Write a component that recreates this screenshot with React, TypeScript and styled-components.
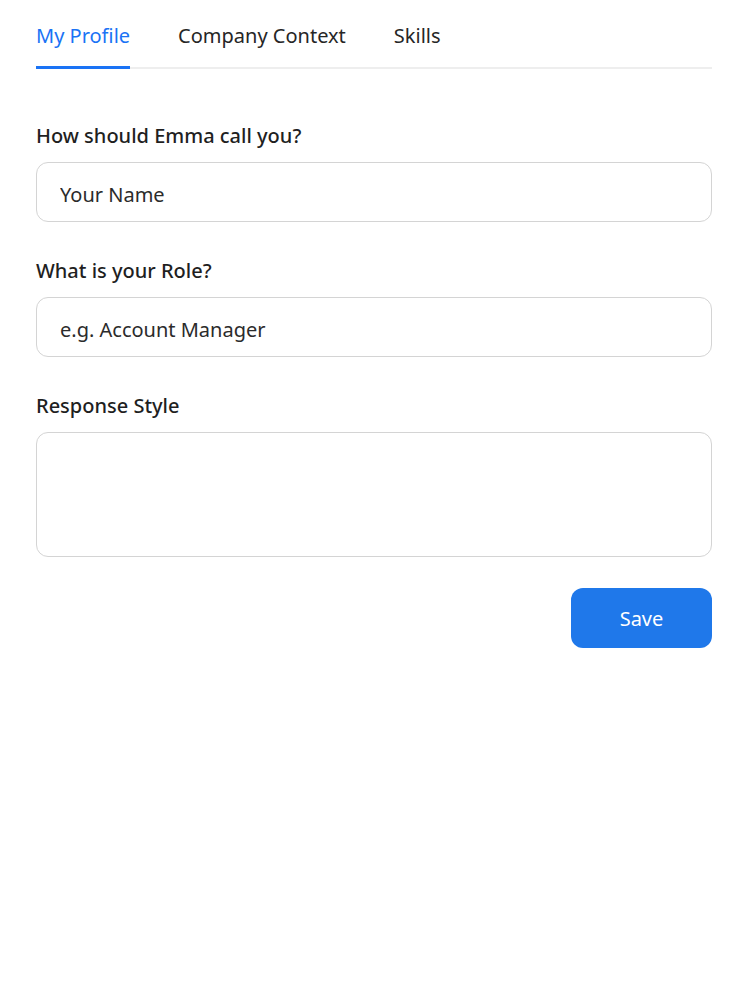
import styled, {createGlobalStyle} from "styled-components";

const GlobalStyle = createGlobalStyle`
	html, body {
		margin: 0;
		padding: 0;
		background: #ffffff;
	}
	body {
		font-family: "Noto Sans", "Open Sans", sans-serif;
		color: #222222;
	}
	* {
		box-sizing: border-box;
	}
`;

const Page = styled.div`
	padding: 0 36px;
	width: 748px;
	min-height: 982px;
`;
const TabBar = styled.div`
	display: flex;
	gap: 48px;
	border-bottom: 2px solid #eeeeee;
`;
const Tab = styled.div<{$active?: boolean}>`
	font-size: 20px;
	line-height: 28px;
	padding: 22px 0 16px;
	margin-bottom: -2px;
	border-bottom: 3px solid ${p => (p.$active ? "#1a73f5" : "transparent")};
	color: ${p => (p.$active ? "#1a73f5" : "#262626")};
	cursor: pointer;
`;
const Form = styled.div`
	display: flex;
	flex-direction: column;
	gap: 36px;
	padding-top: 54px;
`;
const Field = styled.div`
	display: flex;
	flex-direction: column;
	gap: 13px;
`;
const Label = styled.label`
	font-size: 20px;
	line-height: 26px;
	font-weight: 500;
	color: #1f1f1f;
`;
const Input = styled.input`
	height: 60px;
	border: 1.5px solid #d4d4d4;
	border-radius: 12px;
	padding: 4px 23px 0;
	font-family: inherit;
	font-size: 20px;
	color: #262626;
	outline: none;
	&::placeholder {
		color: #2b2b2b;
	}
`;
const TextArea = styled.textarea`
	height: 125px;
	border: 1.5px solid #d4d4d4;
	border-radius: 12px;
	padding: 16px 23px;
	font-family: inherit;
	font-size: 20px;
	resize: none;
	outline: none;
`;
const Actions = styled.div`
	display: flex;
	justify-content: flex-end;
	margin-top: -5px;
`;
const SaveButton = styled.button`
	width: 141px;
	height: 60px;
	border: none;
	border-radius: 12px;
	background: #1f78ea;
	color: #ffffff;
	font-family: inherit;
	font-size: 20px;
	padding-top: 2px;
	cursor: pointer;
`;

const App = () => (
	<>
		<GlobalStyle/>
		<Page>
			<TabBar>
				<Tab $active>My Profile</Tab>
				<Tab>Company Context</Tab>
				<Tab>Skills</Tab>
			</TabBar>
			<Form>
				<Field>
					<Label>How should Emma call you?</Label>
					<Input placeholder="Your Name"/>
				</Field>
				<Field>
					<Label>What is your Role?</Label>
					<Input placeholder="e.g. Account Manager"/>
				</Field>
				<Field>
					<Label>Response Style</Label>
					<TextArea/>
				</Field>
				<Actions>
					<SaveButton>Save</SaveButton>
				</Actions>
			</Form>
		</Page>
	</>
);

export default App;
